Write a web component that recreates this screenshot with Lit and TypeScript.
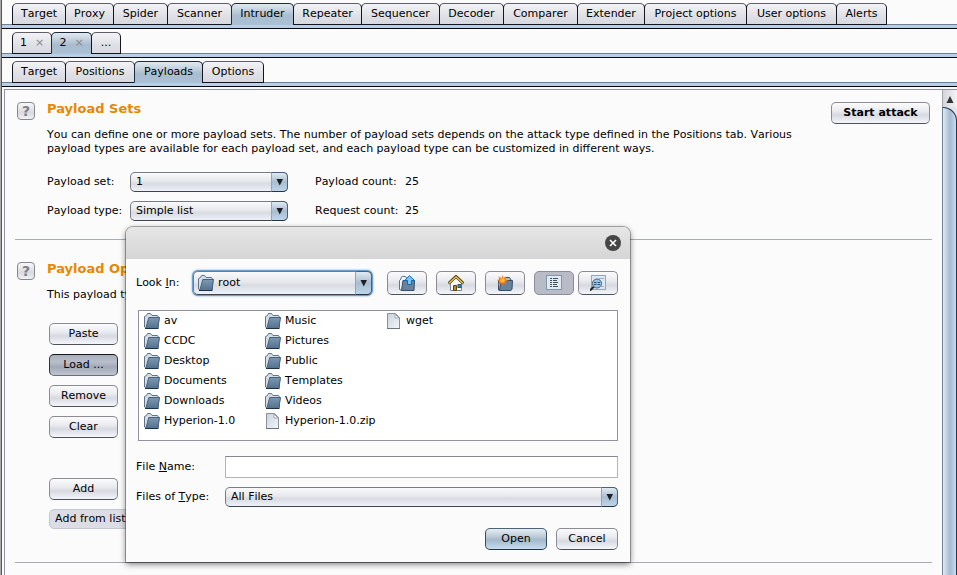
import { LitElement, html, css, svg, nothing } from "lit";
import { customElement } from "lit/decorators.js";
import { classMap } from "lit/directives/class-map.js";
import { styleMap } from "lit/directives/style-map.js";

interface Tab {
  label: string;
  width: number;
  selected?: boolean;
  closable?: boolean;
}

const TOOL_TABS: Tab[] = [
  { label: "Target", width: 54 },
  { label: "Proxy", width: 49 },
  { label: "Spider", width: 55 },
  { label: "Scanner", width: 65 },
  { label: "Intruder", width: 63, selected: true },
  { label: "Repeater", width: 69 },
  { label: "Sequencer", width: 79 },
  { label: "Decoder", width: 65 },
  { label: "Comparer", width: 75 },
  { label: "Extender", width: 68 },
  { label: "Project options", width: 103 },
  { label: "User options", width: 91 },
  { label: "Alerts", width: 51 },
];
const ATTACK_TABS: Tab[] = [
  { label: "1", width: 40, closable: true },
  { label: "2", width: 41, closable: true, selected: true },
  { label: "...", width: 30 },
];
const CONFIG_TABS: Tab[] = [
  { label: "Target", width: 54 },
  { label: "Positions", width: 70 },
  { label: "Payloads", width: 69, selected: true },
  { label: "Options", width: 62 },
];

const FILES: { name: string; dir: boolean }[] = [
  ...["av", "CCDC", "Desktop", "Documents", "Downloads", "Hyperion-1.0", "Music", "Pictures", "Public", "Templates", "Videos"].map(
    (name) => ({ name, dir: true })
  ),
  { name: "Hyperion-1.0.zip", dir: false },
  { name: "wget", dir: false },
];

const folderIcon = html`<svg width="16" height="16" viewBox="0 0 16 16" aria-hidden="true">
  <defs>
    <linearGradient id="f" x1="0" y1="0" x2="0" y2="1">
      <stop offset="0" stop-color="#7f9ab4" /><stop offset="1" stop-color="#547290" />
    </linearGradient>
  </defs>
  <path d="M.5 14V3.500L2.500 2.500L3.500.5H6.500L8 2.500H13.500L14.500 4V14.500H1Z" fill="#d3dde6" stroke="#5f7489" />
  <path d="M5 4H15.800L15.200 8L14 15H2L3.500 9Z" fill="url(#f)" />
  <path d="M2.200 14L3.800 8L4.800 4.500H15.500L14.800 9L14 14.500" fill="none" stroke="#48627c" />
  <path d="M1 15.500H14.500" stroke="#1d3348" />
</svg>`;

const fileIcon = html`<svg width="16" height="16" viewBox="0 0 16 16" aria-hidden="true">
  <defs>
    <linearGradient id="d" x1="0" y1="0" x2="1" y2="1">
      <stop offset="0" stop-color="#c9d3dd" /><stop offset="1" stop-color="#f2f6fb" />
    </linearGradient>
  </defs>
  <path d="M1.500.5H9.500L13.500 4.500V15.500H1.500Z" fill="url(#d)" stroke="#8b8f96" />
  <path d="M9 1V5H13Z" fill="#fff" stroke="#a0a4aa" />
  <path d="M1 15.500H14" stroke="#6e747c" />
</svg>`;

const upIcon = html`<svg width="16" height="16" viewBox="0 0 16 16" aria-hidden="true">
  <path d="M.5 14V5.500L2 4V2.500L3.500 1.500H6.500L8 3.500H12V15H1Z" fill="#eef1f5" stroke="#5f7489" />
  <path d="M4 5.500H15.500L15 15.500H2.500L3.500 9Z" fill="#66829d" stroke="#34506b" />
  <path d="M10.500.7L15.500 5.500H12.500V9.500H8.500V5.500H5.500Z" fill="#74c6ff" stroke="#1868b4" />
</svg>`;

const homeIcon = html`<svg width="16" height="16" viewBox="0 0 16 16" aria-hidden="true">
  <path d="M2.500 8V15.500H13.500V8L8 2.500Z" fill="#fbfbfb" stroke="#7b8794" />
  <path d="M.5 8.500L8 1.500L15.500 8.500" fill="none" stroke="#5c4306" stroke-width="3" />
  <path d="M1 8.200L8 1.800L15 8.200" fill="none" stroke="#e8c65c" stroke-width="1.300" />
  <path d="M5.500 15.500V10.500H8.500V15.500Z" fill="#b58a1f" stroke="#5c4306" />
  <rect x="10" y="9.500" width="3" height="3" fill="#3f80b8" stroke="#28587f" />
</svg>`;

const newFolderIcon = html`<svg width="16" height="16" viewBox="0 0 16 16" aria-hidden="true">
  <path d="M1.500 15V6L3 3.500H7L8 2.500H12.500L14 5V14Z" fill="#b3c2d0" stroke="#34506b" />
  <path d="M4 5.500H15.500L15 14L14 15.500H2.500Z" fill="#66829d" stroke="#34506b" />
  <path d="M5.500 0L6.500 3.200L9.500 1.200L8.400 4.300L11.500 5.300L8.400 6.500L9.500 9.500L6.500 8L5.500 11L4.500 8L1.200 9.800L2.600 6.500L0 5.300L2.600 4.300L1.200 1.200L4.500 3.200Z" fill="#f4761c" />
  <circle cx="5.500" cy="5.300" r="2.300" fill="#ffc02e" />
</svg>`;

const listIcon = html`<svg width="16" height="16" viewBox="0 0 16 16" aria-hidden="true">
  <rect x=".5" y=".5" width="15" height="14" fill="#dfe9f2" stroke="#8195aa" />
  <path d="M4 3.500H6M4 5.500H6M4 7.500H6M4 9.500H6M4 11.500H6M7 3.500H12M7 5.500H11M7 7.500H12M7 9.500H11M7 11.500H12" stroke="#46505a" />
</svg>`;

const detailsIcon = html`<svg width="16" height="16" viewBox="0 0 16 16" aria-hidden="true">
  <rect x="1.500" y=".5" width="14" height="14" fill="#dbe7f1" stroke="#93a7bb" />
  <path d="M9 3.500H14M11 11.500H14" stroke="#a3afba" />
  <path d="M0 15.500L4 11.500" stroke="#202428" stroke-width="2" />
  <circle cx="7" cy="8.500" r="4.500" fill="#9cc4e6" stroke="#4a5c6d" />
  <path d="M4 7.500H6.500M7.500 7.500H10M4 9.500H6.500M7.500 9.500H10" stroke="#1f4f7a" />
</svg>`;

const closeIcon = html`<svg width="16" height="16" viewBox="0 0 16 16" aria-hidden="true">
  <circle cx="8" cy="8" r="8" fill="#464646" />
  <path d="M5 5L11 11M11 5L5 11" stroke="#fff" stroke-width="1.600" />
</svg>`;

const arrow = (up: boolean) => html`<svg width="8" height="8" viewBox="0 0 8 8" aria-hidden="true">
  ${up ? svg`<path d="M4 1L7.500 8H.5Z" fill="#333" />` : svg`<path d="M.5 1H7L3.750 7.500Z" fill="#1c1f24" />`}
</svg>`;

@customElement("app-root")
export class AppRoot extends LitElement {
  static styles = css`
    :host {
      display: block;
      height: 100vh;
      overflow: hidden;
      font: 11px/14px "DejaVu Sans", sans-serif;
      font-kerning: none;
      color: #000;
      background: #fbfbfb;
    }
    * {
      box-sizing: border-box;
    }
    svg {
      display: block;
      flex: none;
    }
    button,
    select,
    input {
      font: inherit;
      font-kerning: none;
      color: inherit;
      margin: 0;
    }
    .window {
      position: relative;
      height: 100%;
      display: flex;
      flex-direction: column;
      border-left: 1px solid #aaa;
    }
    .inner {
      flex: 1;
      min-height: 0;
      display: flex;
      flex-direction: column;
      border-left: 1px solid #55575c;
    }
    .tabbar {
      flex: none;
      padding-top: 3px;
    }
    .tabs {
      display: flex;
      padding-left: 10px;
      margin-bottom: -1px;
      position: relative;
    }
    .tab {
      flex: none;
      height: 22px;
      margin-right: -1px;
      padding: 0;
      display: flex;
      align-items: center;
      justify-content: center;
      gap: 8px;
      white-space: nowrap;
      border: 1px solid #15151f;
      border-top-color: #5e5f68;
      border-radius: 5px 5px 0 0;
      background: linear-gradient(#f3f3f6, #dfe0e5 60%, #d8d9df);
    }
    .tab.selected {
      border-color: #1d2b3d;
      border-bottom-color: #a9c0d5;
      background: linear-gradient(#e1e9f0, #a8bccd 60%, #a9c0d5);
    }
    .x {
      color: #85888e;
    }
    .strip {
      height: 5px;
      background: #b8cfe5;
      border-top: 1px solid #6f7f95;
      border-bottom: 1px solid #05050f;
    }
    .pane {
      flex: 1;
      min-height: 0;
      display: flex;
      margin: 2px 0 0 2px;
      border: solid #9092a2;
      border-width: 1px 0 0 1px;
    }
    .content {
      flex: 1;
      min-width: 0;
      overflow: hidden;
      padding: 0 10px;
    }
    section {
      display: flex;
      align-items: flex-start;
      gap: 12px;
      padding: 12px 2px 0;
      border-bottom: 1px solid #a9acb8;
    }
    .sets {
      height: 150px;
    }
    .options {
      height: 323px;
      padding-top: 22px;
    }
    .help {
      flex: none;
      width: 18px;
      height: 18px;
      padding: 0;
      border: 1px solid #85878c;
      border-radius: 4px;
      font: bold 14px/16px "DejaVu Sans", sans-serif;
      color: #7c7f86;
      background: linear-gradient(#f8f8fa, #d8dae0 60%, #f0f1f5);
    }
    .body {
      flex: 1;
      min-width: 0;
    }
    h2 {
      margin: 0;
      font: bold 13px/14px "DejaVu Sans", sans-serif;
      color: #e58900;
    }
    p {
      margin: 12px 0 0;
    }
    .fields {
      display: grid;
      grid-template-columns: 83px 158px 1fr;
      grid-auto-rows: 20px;
      row-gap: 9px;
      align-items: center;
      margin-top: 16px;
    }
    .count {
      padding-left: 27px;
      display: grid;
      grid-template-columns: 90px 1fr;
      white-space: nowrap;
    }
    .btn {
      height: 22px;
      padding: 0 8px;
      display: inline-flex;
      align-items: center;
      justify-content: center;
      white-space: nowrap;
      border: 1px solid #8a8c92;
      border-bottom-color: #4c5059;
      border-radius: 5px;
      background: linear-gradient(#fbfbfc, #eaebef 40%, #d6d9df 60%, #f4f6fc);
    }
    .btn.bold {
      font-weight: bold;
      width: 99px;
    }
    .btn.pressed {
      border-color: #15151f #30323a #6a6d76;
      background: linear-gradient(#a9aeba, #b9becb 35%, #a2a8b6 60%, #c0c5d3);
    }
    .btn.primary {
      border-color: #4d6478 #34495d #22364a;
      background: linear-gradient(#e6edf3, #b9c9d6 40%, #a3b8ca 55%, #c6dcf0);
    }
    .side {
      display: flex;
      flex-direction: column;
      align-items: flex-start;
      gap: 9px;
      margin: 21px 0 0 2px;
    }
    .side .btn {
      width: 69px;
    }
    .side .gap {
      margin-top: 31px;
    }
    .combo {
      position: relative;
      display: flex;
      height: 20px;
      min-width: 0;
    }
    .combo select {
      appearance: none;
      width: 100%;
      height: 100%;
      padding: 0 20px 0 5px;
      border: 1px solid #787b84;
      border-bottom-color: #3f444e;
      border-radius: 5px;
      outline: 0;
      background: linear-gradient(#fafafb, #e6e8ec 45%, #d8dbe1 60%, #eef1f9);
    }
    .combo .drop {
      position: absolute;
      right: 0;
      top: 0;
      width: 17px;
      height: 100%;
      display: flex;
      align-items: center;
      justify-content: center;
      pointer-events: none;
      border: 1px solid #4a6078;
      border-left-color: #8ea5bb;
      border-bottom-color: #22364a;
      border-radius: 0 5px 5px 0;
      background: linear-gradient(#e1eaf1, #a8bdd0 50%, #bfd5ea);
    }
    .combo.flat {
      width: 158px;
    }
    .combo.flat select {
      border-color: #c5c7d0;
      background: #dcdde4;
    }
    .combo.focus {
      height: 24px;
      flex: 1;
      border-radius: 5px;
      box-shadow: 0 0 0 1px #6d9fce, 0 0 2px 1px #6d9fce;
    }
    .combo.focus select {
      padding-left: 24px;
    }
    .combo .lead {
      position: absolute;
      left: 5px;
      top: 4px;
      pointer-events: none;
    }
    .scroll {
      width: 15px;
      flex: none;
      display: flex;
      flex-direction: column;
      border-left: 1px solid #a3a6ad;
      background: #e4e5ea;
    }
    .scroll button {
      border: 0;
      padding: 0;
      height: 17px;
      flex: none;
      display: flex;
      align-items: center;
      justify-content: center;
      background: linear-gradient(90deg, #d3d5da, #f4f4f6);
    }
    .thumb {
      flex: 1;
      margin-left: -1px;
      border: 1px solid #22364a;
      border-left-color: #6f8499;
      border-bottom: 0;
      border-radius: 0 14px 0 0;
      background: linear-gradient(90deg, #dfe9f2, #a5bbd0 55%, #c9ddf0);
    }
    .dialog {
      position: absolute;
      left: 125px;
      top: 227px;
      width: 504px;
      border-radius: 7px 7px 0 0;
      background: #fbfbfb;
      box-shadow: 0 0 0 1px #00000048, 0 2px 6px 0 #0008;
    }
    .title {
      height: 32px;
      display: flex;
      align-items: center;
      justify-content: flex-end;
      padding-right: 9px;
      border-radius: 7px 7px 0 0;
      background: linear-gradient(#e6e6e6, #d5d5d5);
    }
    .title button {
      border: 0;
      padding: 0;
      background: none;
    }
    .form {
      padding: 12px 12px 12px 10px;
    }
    .look {
      display: flex;
      align-items: center;
      gap: 9px;
    }
    .look label {
      width: 48px;
      white-space: nowrap;
    }
    .look .combo {
      margin-right: 6px;
    }
    .tool {
      width: 40px;
      height: 24px;
      padding: 0;
    }
    .tool.on {
      border-color: #8b8d95;
      background: #b9bcc6;
      margin-right: -5px;
    }
    .files {
      list-style: none;
      margin: 15px 0 0 2px;
      padding: 0 5px;
      height: 131px;
      display: grid;
      grid-auto-flow: column;
      grid-template-rows: repeat(6, 20px);
      grid-auto-columns: 121px;
      border: 1px solid #9092a2;
      background: #fff;
    }
    .files li {
      display: flex;
      align-items: center;
      gap: 4px;
      white-space: nowrap;
    }
    .naming {
      display: grid;
      grid-template-columns: 89px 1fr;
      row-gap: 9px;
      align-items: center;
      margin-top: 15px;
    }
    .naming input {
      width: 100%;
      height: 22px;
      border: 1px solid #b4b5b9;
      border-top-color: #85868c;
      background: #fff;
      padding: 0 5px;
    }
    .actions {
      display: flex;
      justify-content: flex-end;
      gap: 9px;
      margin-top: 21px;
    }
    .actions .btn {
      width: 62px;
    }
  `;

  private tabBar(tabs: Tab[]) {
    return html`<div class="tabbar">
      <div class="tabs" role="tablist">
        ${tabs.map(
          (t) => html`<button
            role="tab"
            aria-selected=${t.selected ? "true" : "false"}
            class=${classMap({ tab: true, selected: !!t.selected })}
            style=${styleMap({ width: `${t.width}px` })}
          >
            <span>${t.label}</span>${t.closable ? html`<span class="x">×</span>` : nothing}
          </button>`
        )}
      </div>
      <div class="strip"></div>
    </div>`;
  }

  private combo(id: string, value: string, kind = "", icon: unknown = nothing) {
    return html`<div class="combo ${kind}">
      <select id=${id}><option>${value}</option></select>
      ${icon === nothing ? nothing : html`<span class="lead">${icon}</span>`}
      <span class="drop">${arrow(false)}</span>
    </div>`;
  }

  render() {
    return html`<div class="window">
      <div class="inner">
        ${this.tabBar(TOOL_TABS)} ${this.tabBar(ATTACK_TABS)} ${this.tabBar(CONFIG_TABS)}
        <div class="pane">
          <div class="content">
            <section class="sets">
              <button class="help">?</button>
              <div class="body">
                <h2>Payload Sets</h2>
                <p>
                  You can define one or more payload sets. The number of payload sets depends on the attack type defined in the Positions tab. Various<br />
                  payload types are available for each payload set, and each payload type can be customized in different ways.
                </p>
                <div class="fields">
                  <label for="set">Payload set:</label>
                  ${this.combo("set", "1")}
                  <div class="count"><span>Payload count:</span><span>25</span></div>
                  <label for="type">Payload type:</label>
                  ${this.combo("type", "Simple list")}
                  <div class="count"><span>Request count:</span><span>25</span></div>
                </div>
              </div>
              <button class="btn bold">Start attack</button>
            </section>
            <section class="options">
              <button class="help">?</button>
              <div class="body">
                <h2>Payload Options [Simple list]</h2>
                <p>This payload type lets you configure a simple list of strings that are used as payloads.</p>
                <div class="side">
                  <button class="btn">Paste</button>
                  <button class="btn pressed">Load ...</button>
                  <button class="btn">Remove</button>
                  <button class="btn">Clear</button>
                  <button class="btn gap">Add</button>
                  ${this.combo("addlist", "Add from list ...", "flat")}
                </div>
              </div>
            </section>
          </div>
          <div class="scroll">
            <button aria-label="Scroll up">${arrow(true)}</button>
            <div class="thumb"></div>
          </div>
        </div>
      </div>
      <div class="dialog" role="dialog">
        <div class="title"><button aria-label="Close">${closeIcon}</button></div>
        <div class="form">
          <div class="look">
            <label for="look">Look <u>I</u>n:</label>
            ${this.combo("look", "root", "focus", folderIcon)}
            <button class="btn tool" aria-label="Up one level">${upIcon}</button>
            <button class="btn tool" aria-label="Home">${homeIcon}</button>
            <button class="btn tool" aria-label="New folder">${newFolderIcon}</button>
            <button class="btn tool on" aria-label="List">${listIcon}</button>
            <button class="btn tool" aria-label="Details">${detailsIcon}</button>
          </div>
          <ul class="files">
            ${FILES.map((f) => html`<li>${f.dir ? folderIcon : fileIcon}<span>${f.name}</span></li>`)}
          </ul>
          <div class="naming">
            <label for="name">File <u>N</u>ame:</label>
            <input id="name" type="text" />
            <label for="ftype">Files of <u>T</u>ype:</label>
            ${this.combo("ftype", "All Files")}
          </div>
          <div class="actions">
            <button class="btn primary">Open</button>
            <button class="btn">Cancel</button>
          </div>
        </div>
      </div>
    </div>`;
  }
}
